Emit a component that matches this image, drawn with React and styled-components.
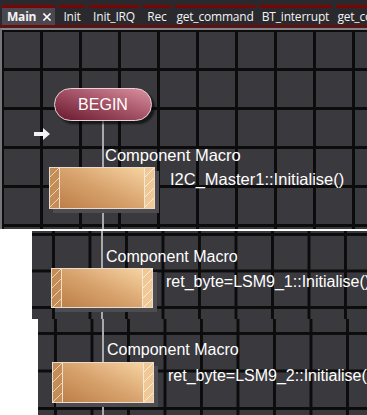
import React from 'react'
import styled, { createGlobalStyle } from 'styled-components'

const GlobalStyle = createGlobalStyle`
  html, body {
    margin: 0;
    padding: 0;
    background: #ffffff;
  }
`

const tabs = [
    { label: 'Main', width: 53, active: true },
    { label: 'Init', width: 26 },
    { label: 'Init_IRQ', width: 50 },
    { label: 'Rec', width: 28 },
    { label: 'get_command', width: 80 },
    { label: 'BT_interrupt', width: 73 },
    { label: 'get_command', width: 80 },
]

const CloseIcon = () => (
    <svg width="8" height="8" viewBox="0 0 8 8">
        <path d="M1 1 L7 7 M7 1 L1 7" stroke="#ffffff" strokeWidth="1.6" strokeLinecap="square" />
    </svg>
)

const EntryArrow = () => (
    <svg width="17" height="12" viewBox="0 0 17 12">
        <path d="M0 4 H9 V0 L16 6 L9 12 V8 H0 Z" fill="#f2f2f6" />
    </svg>
)

const MacroNode = ({ label, call, labelX, boxX, boxW, boxH, gap, textGap, textTop, size }) => {
    return (
        <Macro>
            <MacroLabel $x={labelX} $size={size}>{label}</MacroLabel>
            <MacroRow $x={boxX} $gap={gap}>
                <MacroBox $w={boxW} $h={boxH}>
                    <Hatch $tone="dark" />
                    <BoxBody />
                    <Hatch $tone="light" />
                </MacroBox>
                <CallText $gap={textGap} $top={textTop} $size={size}>{call}</CallText>
            </MacroRow>
        </Macro>
    )
}

const App = () => {
    return (
        <Screen>
            <GlobalStyle />
            <TabBar>
                {tabs.map((t, i) => (
                    <Tab key={i} $w={t.width} $active={t.active}>
                        <TabLabel $active={t.active}>{t.label}</TabLabel>
                        {t.active && <CloseIcon />}
                    </Tab>
                ))}
            </TabBar>

            <Panel $framed $h={201} $cell={39} $ox={1} $oy={1}>
                <Connector $x={100} $top={91} />
                <Begin>BEGIN</Begin>
                <ArrowMark>
                    <EntryArrow />
                </ArrowMark>
                <MacroNode
                    label="Component Macro"
                    call="I2C_Master1::Initialise()"
                    labelX={103}
                    boxX={47}
                    boxW={106}
                    boxH={42}
                    gap={2}
                    textGap={15}
                    textTop={3}
                    size={16.5}
                />
            </Panel>

            <Panel $gap={2} $inset={32} $h={88} $cell={36.5} $ox={20} $oy={2} $padTop={11}>
                <Connector $x={69} $top={0} />
                <MacroNode
                    label="Component Macro"
                    call="ret_byte=LSM9_1::Initialise()"
                    labelX={74}
                    boxX={19}
                    boxW={102}
                    boxH={40}
                    gap={2}
                    textGap={13}
                    textTop={5}
                    size={16}
                />
            </Panel>

            <Panel $inset={38} $grow $cell={36.5} $cellY={37.5} $ox={16} $oy={13} $padTop={16}>
                <Connector $x={64} $top={0} />
                <MacroNode
                    label="Component Macro"
                    call="ret_byte=LSM9_2::Initialise()"
                    labelX={69}
                    boxX={14}
                    boxW={102}
                    boxH={41}
                    gap={3}
                    textGap={14}
                    textTop={5}
                    size={16}
                />
            </Panel>
        </Screen>
    )
}

export default App

const Screen = styled.div`
    width: 367px;
    height: 415px;
    display: flex;
    flex-direction: column;
    overflow: hidden;
    background: #ffffff;
`
const TabBar = styled.div`
    flex: none;
    height: 28px;
    box-sizing: border-box;
    padding: 5px 0 3px 2px;
    display: flex;
    gap: 4px;
    overflow: hidden;
    background: linear-gradient(to bottom, #2a292d 25px, #7a0505 25px, #7a0505 27px, #2a292d 27px);
`
const Tab = styled.div`
    flex: none;
    width: ${props => props.$w}px;
    box-sizing: border-box;
    border-top: 3px solid #7a0505;
    background: ${props => props.$active ? '#4a484f' : 'transparent'};
    display: flex;
    align-items: center;
    justify-content: ${props => props.$active ? 'space-between' : 'center'};
    padding: ${props => props.$active ? '0 4px 0 5px' : '0'};
    svg {
        margin-top: 1px;
    }
`
const TabLabel = styled.span`
    font-family: "Open Sans", "Noto Sans", sans-serif;
    font-size: 12px;
    font-weight: ${props => props.$active ? 700 : 400};
    letter-spacing: -0.2px;
    color: #f4f4f4;
    white-space: nowrap;
    line-height: 16px;
`
const Panel = styled.div`
    position: relative;
    flex: ${props => props.$grow ? '1 1 auto' : 'none'};
    height: ${props => props.$h ? `${props.$h}px` : 'auto'};
    margin-top: ${props => props.$gap || 0}px;
    margin-left: ${props => props.$inset || 0}px;
    padding-top: ${props => props.$padTop || 0}px;
    box-sizing: border-box;
    display: flex;
    flex-direction: column;
    overflow: hidden;
    background-color: #3a393e;
    background-image:
        linear-gradient(to right, #0c0c0d 3px, transparent 3px),
        linear-gradient(to bottom, #0c0c0d 3px, transparent 3px);
    background-size: ${props => props.$cell}px ${props => props.$cellY || props.$cell}px;
    background-position: ${props => props.$ox}px ${props => props.$oy}px;
    background-origin: border-box;
    border-top: ${props => props.$framed ? '2px solid #858489' : 'none'};
    border-left: ${props => props.$framed ? '2px solid #76757a' : 'none'};
`
const Connector = styled.div`
    position: absolute;
    left: ${props => props.$x}px;
    top: ${props => props.$top}px;
    bottom: 0;
    width: 2px;
    background: #a9a8ad;
`
const Begin = styled.div`
    position: relative;
    flex: none;
    margin: 58px 0 0 52px;
    width: 98px;
    height: 33px;
    box-sizing: border-box;
    border: 1px solid #ead2da;
    border-radius: 17px;
    background: linear-gradient(to top right, #742438 10%, #a8566a 55%, #d9929f);
    box-shadow: 3px 3px 2px rgba(0, 0, 0, 0.6);
    display: flex;
    align-items: center;
    justify-content: center;
    font-family: "Liberation Sans", Arial, sans-serif;
    font-size: 16px;
    color: #ffffff;
`
const ArrowMark = styled.div`
    flex: none;
    margin: 7px 0 0 32px;
    height: 12px;
    display: flex;
`
const Macro = styled.div`
    position: relative;
    display: flex;
    flex-direction: column;
    margin-top: 6px;
`
const MacroLabel = styled.div`
    padding-left: ${props => props.$x}px;
    font-family: "Liberation Sans", Arial, sans-serif;
    font-size: ${props => props.$size}px;
    line-height: ${props => props.$size > 16 ? 19 : 18}px;
    color: #ffffff;
    white-space: nowrap;
`
const MacroRow = styled.div`
    display: flex;
    align-items: flex-start;
    margin-top: ${props => props.$gap}px;
    padding-left: ${props => props.$x}px;
`
const MacroBox = styled.div`
    flex: none;
    width: ${props => props.$w}px;
    height: ${props => props.$h}px;
    box-sizing: border-box;
    border: 1px solid #e9dccd;
    display: flex;
    box-shadow: 4px 4px 0 #4d4c51;
`
const Hatch = styled.div`
    flex: none;
    width: 9px;
    background: repeating-linear-gradient(
        135deg,
        ${props => props.$tone === 'dark' ? '#c48c57' : '#efc896'} 0 6px,
        ${props => props.$tone === 'dark' ? '#ecd4bb' : '#fbeede'} 6px 7px
    );
    border-left: ${props => props.$tone === 'light' ? '1px solid #f6e6d4' : 'none'};
    border-right: ${props => props.$tone === 'dark' ? '1px solid #f2dfcb' : 'none'};
`
const BoxBody = styled.div`
    flex: 1;
    background: linear-gradient(to top right, #bd7f49, #d8a36e 50%, #f6d3a0);
`
const CallText = styled.div`
    flex: none;
    margin-left: ${props => props.$gap}px;
    margin-top: ${props => props.$top}px;
    font-family: "Liberation Sans", Arial, sans-serif;
    font-size: ${props => props.$size}px;
    line-height: ${props => props.$size > 16 ? 19 : 18}px;
    color: #ffffff;
    white-space: nowrap;
`
